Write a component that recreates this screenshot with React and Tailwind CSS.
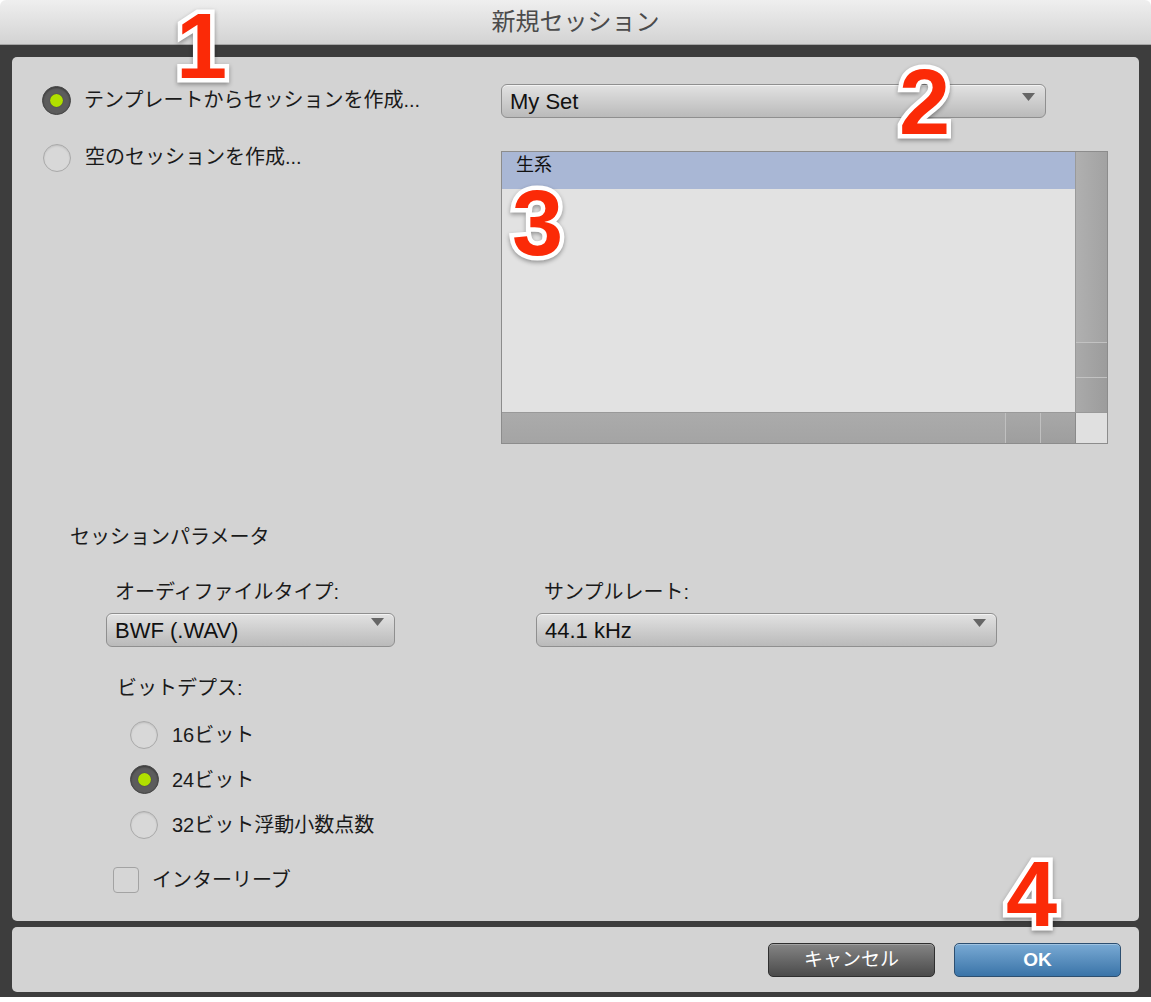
import React from 'react';

const JP = { fontFamily: '"Liberation Sans", "Noto Sans CJK JP", sans-serif' };

function Radio({ checked }) {
  if (checked) {
    return (
      <span className="flex h-[29px] w-[29px] shrink-0 items-center justify-center rounded-full border border-[#444] bg-[#5c5c5c] shadow-[inset_0_1px_2px_rgba(0,0,0,0.4)]">
        <span className="h-[13px] w-[13px] rounded-full bg-[#b1e000] shadow-[0_0_1px_rgba(0,0,0,0.5)]" />
      </span>
    );
  }
  return (
    <span className="h-[28px] w-[28px] shrink-0 rounded-full border-[1.5px] border-[#a9a9a9] bg-[#d8d8d8] shadow-[inset_0_1px_2px_rgba(0,0,0,0.12)]" />
  );
}

function Select({ value, width, arrowTop = 'pt-[6px]' }) {
  return (
    <div
      className={`flex h-[34px] ${width} items-start justify-between rounded-[6px] border border-[#8f8f8f] bg-gradient-to-b from-[#e2e2e2] to-[#bababa] pl-[8px] pr-[10px] shadow-[inset_0_1px_0_rgba(255,255,255,0.6)]`}
    >
      <span className="text-[22px] leading-[33px] text-[#111]">{value}</span>
      <span className={arrowTop}>
        <svg width="13" height="8" viewBox="0 0 13 8">
          <path d="M0 0 L13 0 L6.5 8 Z" fill="#666" />
        </svg>
      </span>
    </div>
  );
}

function Marker({ n, className }) {
  return (
    <span
      className={`pointer-events-none absolute text-[92px] font-bold leading-[92px] text-[#fb2a07] [-webkit-text-stroke:9px_white] [paint-order:stroke_fill] [filter:drop-shadow(0_2px_2px_rgba(0,0,0,0.35))] ${className}`}
      style={{ fontFamily: '"Liberation Sans", Arial, sans-serif' }}
    >
      {n}
    </span>
  );
}

export default function App() {
  return (
    <div className="relative h-[1002px] w-[1151px] overflow-hidden bg-white" style={JP}>
      {/* title bar */}
      <div className="flex h-[45px] items-center justify-center rounded-t-[6px] border-b border-[#a5a5a5] bg-gradient-to-b from-[#efefef] to-[#d3d3d3]">
        <span className="text-[24px] text-[#4b4b4b]">新規セッション</span>
      </div>

      {/* frame */}
      <div className="flex h-[952px] flex-col gap-[6px] bg-[#3d3d3d] px-[12px] pt-[12px] pb-[5px]">
        {/* main panel */}
        <div className="flex h-[865px] flex-col rounded-[5px] bg-[#d3d3d3] text-[20px] text-[#1a1a1a]">
          <div className="flex pt-[27px]">
            <div className="flex w-[489px] flex-col gap-[28px] pl-[30px] pt-[2px]">
              <div className="flex items-center gap-[13px]">
                <Radio checked />
                <span className="leading-[29px]">テンプレートからセッションを作成...</span>
              </div>
              <div className="flex items-center gap-[14px] pl-[1px]">
                <Radio />
                <span className="leading-[29px]">空のセッションを作成...</span>
              </div>
            </div>
            <div className="flex flex-col gap-[33px]">
              <Select value="My Set" width="w-[545px]" arrowTop="pt-[8px]" />
              {/* template list */}
              <div className="flex h-[293px] w-[607px] flex-col border border-[#8c8c8c]">
                <div className="flex flex-1">
                  <div className="flex flex-1 flex-col bg-[#e2e2e2]">
                    <div className="h-[37px] bg-[#a9b7d5] pl-[14px] text-[18px] leading-[26px] text-[#111]">生系</div>
                  </div>
                  <div className="flex w-[32px] flex-col border-l border-[#9a9a9a] bg-gradient-to-r from-[#b0b0b0] to-[#a2a2a2]">
                    <div className="flex-1" />
                    <div className="h-[35px] border-t border-[#c2c2c2] bg-gradient-to-r from-[#aaaaaa] to-[#9c9c9c]" />
                    <div className="h-[35px] border-t border-[#c2c2c2] bg-gradient-to-r from-[#aaaaaa] to-[#9c9c9c]" />
                  </div>
                </div>
                <div className="flex h-[31px] border-t border-[#999]">
                  <div className="flex flex-1 bg-gradient-to-b from-[#ababab] to-[#a4a4a4]">
                    <div className="flex-1" />
                    <div className="w-[35px] border-l border-[#c0c0c0] bg-gradient-to-b from-[#a8a8a8] to-[#9e9e9e]" />
                    <div className="w-[35px] border-l border-[#c0c0c0] bg-gradient-to-b from-[#a8a8a8] to-[#9e9e9e]" />
                  </div>
                  <div className="w-[32px] border-l border-[#8a8a8a] bg-[#e0e0e0]" />
                </div>
              </div>
            </div>
          </div>

          {/* session parameters */}
          <div className="mt-[79px] pl-[58px] leading-[28px]">セッションパラメータ</div>
          <div className="mt-[27px] flex">
            <div className="flex w-[524px] flex-col gap-[7px] pl-[94px]">
              <span className="pl-[9px] leading-[28px]">オーディファイルタイプ:</span>
              <Select value="BWF (.WAV)" width="w-[289px]" arrowTop="pt-[4px]" />
            </div>
            <div className="flex flex-col gap-[7px]">
              <span className="pl-[8px] leading-[28px]">サンプルレート:</span>
              <Select value="44.1 kHz" width="w-[461px]" arrowTop="pt-[5px]" />
            </div>
          </div>

          <div className="mt-[27px] pl-[105px] leading-[28px]">ビットデプス:</div>
          <div className="mt-[10px] flex flex-col pl-[118px]">
            <div className="flex h-[45px] items-center gap-[14px]">
              <Radio />
              <span>16ビット</span>
            </div>
            <div className="flex h-[45px] items-center gap-[13px]">
              <Radio checked />
              <span>24ビット</span>
            </div>
            <div className="flex h-[45px] items-center gap-[14px]">
              <Radio />
              <span>32ビット浮動小数点数</span>
            </div>
          </div>
          <div className="mt-[10px] flex h-[46px] items-center gap-[13px] pl-[101px]">
            <span className="h-[26px] w-[26px] rounded-[4px] border-[1.5px] border-[#a3a3a3] bg-[#d6d6d6]" />
            <span>インターリーブ</span>
          </div>
        </div>

        {/* button panel */}
        <div className="flex h-[65px] items-start justify-end gap-[19px] rounded-[5px] bg-[#d3d3d3] pt-[16px] pr-[18px]">
          <button className="h-[34px] w-[167px] rounded-[5px] border border-[#2f2f2f] bg-gradient-to-b from-[#858585] to-[#4b4b4b] text-[19px] text-white shadow-[inset_0_1px_0_rgba(255,255,255,0.25)]">
            キャンセル
          </button>
          <button className="h-[34px] w-[167px] rounded-[5px] border border-[#2d4f70] bg-gradient-to-b from-[#79aad4] to-[#3a74a8] text-[19px] font-bold text-white shadow-[inset_0_1px_0_rgba(255,255,255,0.3)]">
            OK
          </button>
        </div>
      </div>

      <Marker n="1" className="left-[176px] top-[0px]" />
      <Marker n="2" className="left-[899px] top-[56px]" />
      <Marker n="3" className="left-[512px] top-[177px]" />
      <Marker n="4" className="left-[1006px] top-[848px]" />
    </div>
  );
}
